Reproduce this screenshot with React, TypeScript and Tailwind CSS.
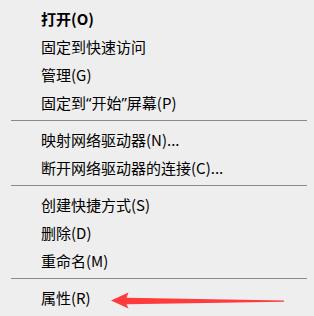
const groups: { label: React.ReactNode; key: string; bold?: boolean }[][] = [
  [
    { key: 'open', label: '打开(O)', bold: true },
    { key: 'pin', label: '固定到快速访问' },
    { key: 'manage', label: '管理(G)' },
    {
      key: 'start',
      label: (
        <>
          固定到<span className="font-['Noto_Sans']">“</span>开始<span className="font-['Noto_Sans']">”</span>屏幕(P)
        </>
      ),
    },
  ],
  [
    { key: 'map', label: '映射网络驱动器(N)...' },
    { key: 'unmap', label: '断开网络驱动器的连接(C)...' },
  ],
  [
    { key: 'shortcut', label: '创建快捷方式(S)' },
    { key: 'delete', label: '删除(D)' },
    { key: 'rename', label: '重命名(M)' },
  ],
  [{ key: 'props', label: '属性(R)' }],
]

export default function App() {
  return (
    <div
      className="relative w-[314px] h-[316px] overflow-hidden bg-[#eeeeee] pt-[4px] text-[15px] text-black"
      style={{ fontFamily: '"Noto Sans CJK SC", "Noto Sans", sans-serif' }}
    >
      {groups.map((items, gi) => (
        <div key={gi}>
          {gi > 0 && <div className="ml-[11px] mt-[4px] mb-[4px] h-px w-[296px] bg-[#8a8a8a]" />}
          {items.map((it) => (
            <div
              key={it.key}
              className={`flex h-[28px] items-center pl-[41px] leading-none whitespace-pre ${it.bold ? 'font-bold' : ''}`}
            >
              {it.label}
            </div>
          ))}
        </div>
      ))}

      {/* red annotation arrow */}
      <svg className="pointer-events-none absolute left-0 top-0" width="314" height="316" viewBox="0 0 314 316">
        <polygon
          points="111,300.5 128.5,292.5 126.5,297.8 284,300.6 284,301.8 126.5,304.2 128.5,308.5"
          fill="#ff3b3b"
        />
      </svg>
    </div>
  )
}
